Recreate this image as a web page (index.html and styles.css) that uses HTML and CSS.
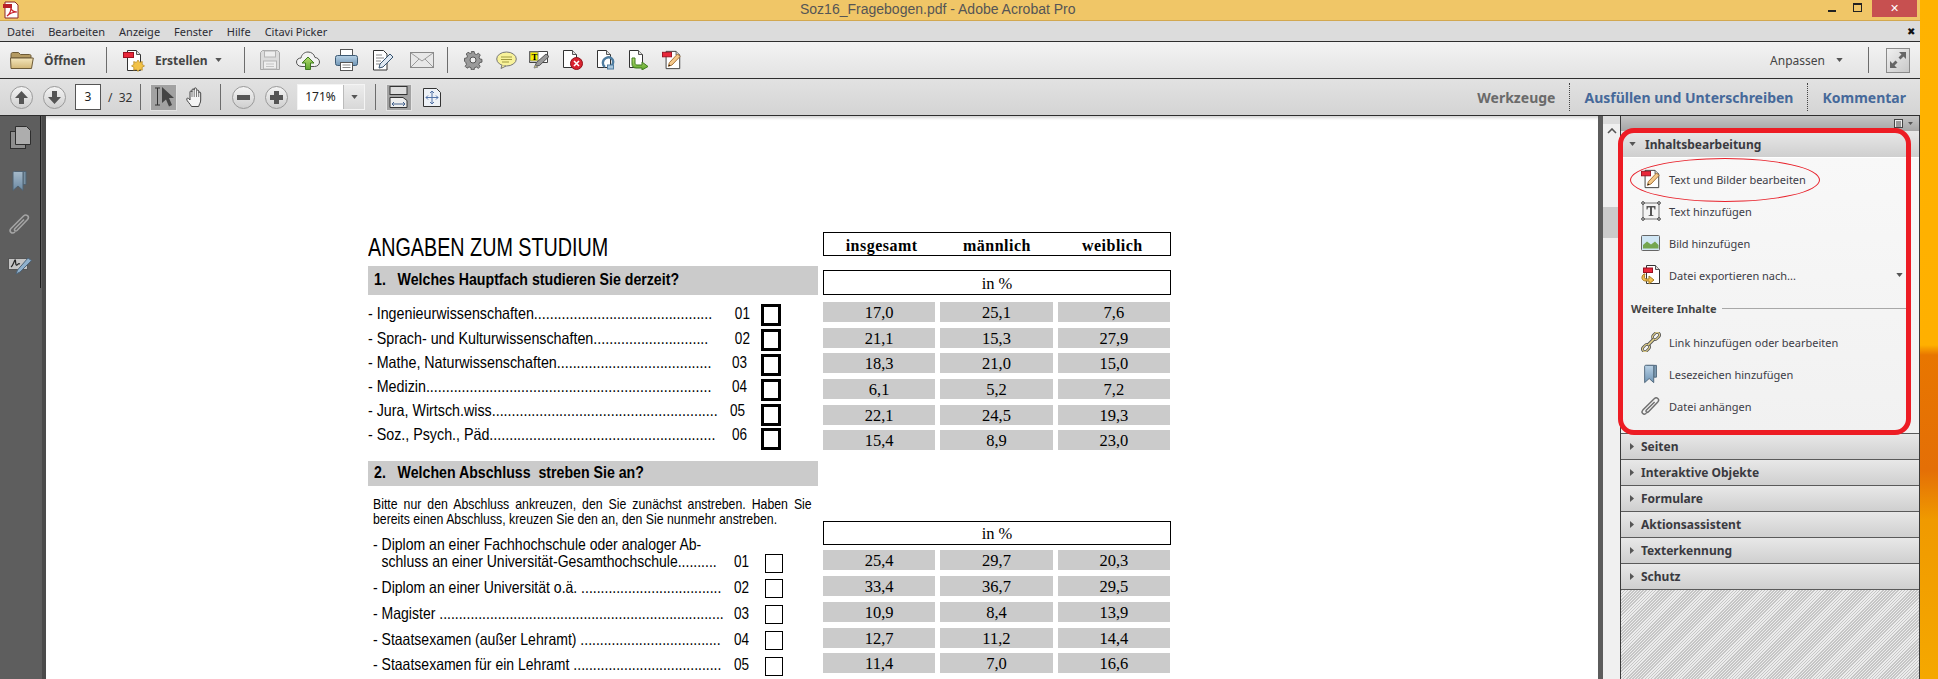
FILE: index.html
```html
<!DOCTYPE html>
<html lang="de">
<head>
  <meta charset="UTF-8">
  <title>Soz16_Fragebogen.pdf - Adobe Acrobat Pro</title>
  <link rel="stylesheet" href="styles.css">
</head>
<body>
  <svg class="defs" width="0" height="0">
    <defs>
      <linearGradient id="g-folder" x1="0" y1="0" x2="0" y2="1"><stop offset="0" stop-color="#f4e6bd"/><stop offset="1" stop-color="#d3b878"/></linearGradient>
      <linearGradient id="g-blue" x1="0" y1="0" x2="0" y2="1"><stop offset="0" stop-color="#b9d2e6"/><stop offset="1" stop-color="#6f95b5"/></linearGradient>
      <linearGradient id="g-green" x1="0" y1="0" x2="0" y2="1"><stop offset="0" stop-color="#b5dd70"/><stop offset="1" stop-color="#5ea52c"/></linearGradient>
      <symbol id="i-editdoc" viewBox="0 0 22 22">
        <path d="M4.500 1.500h11l4 4v15h-15z" fill="#fff" stroke="#333"/>
        <path d="M15.500 1.500v4h4" fill="#ddd" stroke="#555"/>
        <rect x="0.500" y="2.500" width="10" height="5" fill="#e8283a" stroke="#9a1020"/>
        <path d="M7 18l1-4 9-9.500 3 2.500-9 9.500z" fill="#f5c98a" stroke="#a06a30"/>
        <path d="M7 18l1-2 1.500 1z" fill="#111"/>
      </symbol>
      <symbol id="i-clip" viewBox="0 0 22 22">
        <path d="M6 19c-3 2.500-6.500-.5-4-3.500L14.500 3c2.800-2.500 6.500.5 4 3.500L8 17.500c-1.500 1.300-3.500-.5-2-2L15 6.500" fill="none" stroke="currentColor" stroke-width="1.600"/>
      </symbol>
      <symbol id="i-bookmark" viewBox="0 0 20 22">
        <path d="M4 1.500h12v13h-3v-13" fill="#7f9db5" stroke="#4d6478"/>
        <path d="M3 2.500c0-1 1-1 2-1h8v19l-5-4.500-5 4.500z" fill="url(#g-blue)" stroke="#4d6478"/>
      </symbol>
      <symbol id="i-caret" viewBox="0 0 8 5"><path d="M0 0h8L4 5z" fill="currentColor"/></symbol>
    </defs>
  </svg>

  <div class="window">
    <header class="titlebar">
      <svg class="app-icon" width="18" height="18" viewBox="0 0 18 18"><path d="M3 1h10l3 3v13H3z" fill="#fff" stroke="#8a2a2a"/><rect x="1" y="3" width="9" height="4" fill="#b8202a"/><path d="M5 15c3-2 4-6 4-9 0 3 2 5 6 5-4 0-7 1-10 4z" fill="none" stroke="#c8202a" stroke-width="1.200"/></svg>
      <div class="title">Soz16_Fragebogen.pdf - Adobe Acrobat Pro</div>
      <div class="win-controls">
        <span class="win-min"></span>
        <span class="win-max"></span>
        <span class="win-close">✕</span>
      </div>
    </header>

    <nav class="menubar">
      <span>Datei</span><span>Bearbeiten</span><span>Anzeige</span><span>Fenster</span><span>Hilfe</span><span>Citavi Picker</span>
      <span class="menu-x">✖</span>
    </nav>

    <div class="toolbar toolbar-main">
      <svg class="open-icon" width="24" height="19" viewBox="0 0 24 19"><path d="M1 3.500c0-1 .5-2 1.500-2h6l2 2h9c1 0 1.500.5 1.500 1.500v2H1z" fill="#b49a62" stroke="#6d5b38"/><path d="M1 17.500L.5 7h22.800l-1.800 10.500z" fill="url(#g-folder)" stroke="#6d5b38"/></svg>
      <span class="tool-label open-label">Öffnen</span>
      <span class="sep sep-open"></span>
      <svg class="create-icon" width="22" height="23" viewBox="0 0 22 23"><path d="M4.500 1.500h9l4 4v16h-13z" fill="#fff" stroke="#333"/><path d="M13.500 1.500v4h4" fill="#ddd" stroke="#555"/><rect x="0.500" y="3.500" width="10" height="5" fill="#e8283a" stroke="#9a1020"/><path d="M15 11l1.600 2.400 2.700-.8-.2 2.800 2.400 1.500-2.400 1.500.2 2.800-2.700-.8-1.600 2.100-1.600-2.100-2.700.8.200-2.800-2.400-1.500 2.400-1.500-.2-2.800 2.700.8z" fill="#f2c246" stroke="#b08420" stroke-width=".7"/></svg>
      <span class="tool-label create-label">Erstellen</span>
      <svg class="caret create-caret" width="7" height="4"><use href="#i-caret"/></svg>
      <span class="sep sep-create"></span>

      <span class="cell">
        <svg width="20" height="20" viewBox="0 0 20 20"><path d="M.5 2.500l2-2h15l2 2v17H.5z" fill="#dcdcdc" stroke="#a8a8a8"/><rect x="4.500" y="1" width="11" height="6" fill="#eee" stroke="#b4b4b4"/><rect x="3.500" y="11" width="13" height="8" fill="#eee" stroke="#b4b4b4"/><path d="M6 14h8M6 16.500h8" stroke="#c4c4c4"/></svg>
      </span>
      <span class="cell">
        <svg width="24" height="19" viewBox="0 0 24 19"><path d="M6 15.500c-3.500 0-5.500-2-5.500-4.500S2.500 7 5 7c.5-3.500 3.500-6 7-6 3.500 0 6 2 7 5.500 2.500 0 4.500 2 4.500 4.500s-2 4.500-5 4.500z" fill="#f2f2f2" stroke="#555"/><path d="M12 6l6 6h-3.500v6.500h-5V12H6z" fill="url(#g-green)" stroke="#3f7a1f"/></svg>
      </span>
      <span class="cell">
        <svg width="23" height="22" viewBox="0 0 23 22"><rect x="5.500" y=".5" width="12" height="7" fill="#fff" stroke="#555"/><rect x=".5" y="6.500" width="22" height="10" rx="2" fill="url(#g-blue)" stroke="#3d5a74"/><rect x="5.500" y="13.500" width="12" height="8" fill="#fff" stroke="#555"/><path d="M7.500 16h8M7.500 18.500h8" stroke="#888"/></svg>
      </span>
      <span class="cell">
        <svg width="22" height="21" viewBox="0 0 22 21"><path d="M.5.500h10l3.500 3.500v16H.5z" fill="#fff" stroke="#333"/><path d="M3 5h6M3 8h8M3 11h5M3 14h4" stroke="#888"/><path d="M6 18l1-4 10-10 3 3-10 10z" fill="#dfe8f2" stroke="#35526e"/></svg>
      </span>
      <span class="cell">
        <svg width="24" height="16" viewBox="0 0 24 16"><rect x=".5" y=".5" width="23" height="15" fill="#e8e8e8" stroke="#8a8a8a"/><path d="M1 1l11 8 11-8M1 15l8-8M23 15l-8-8" fill="none" stroke="#9a9a9a"/></svg>
      </span>
      <span class="sep sep-tools"></span>
      <span class="cell cell-sm">
        <svg width="19" height="19" viewBox="0 0 19 19"><path d="M8 .5h3l.5 2.500 2 .8 2.200-1.400 2 2-1.400 2.200.8 2 2.400.5v3l-2.500.5-.8 2 1.400 2.200-2 2-2.200-1.400-2 .8-.5 2.400H8l-.5-2.500-2-.8-2.200 1.400-2-2 1.400-2.200-.8-2L.5 11V8L3 7.500l.8-2L2.400 3.300l2-2L6.600 2.700l2-.8z" transform="scale(.92)" fill="#9a9a9a" stroke="#555"/><circle cx="9" cy="9" r="3" fill="#eee" stroke="#555"/></svg>
      </span>
      <span class="cell cell-sm">
        <svg width="21" height="18" viewBox="0 0 21 18"><ellipse cx="10.500" cy="8" rx="9.800" ry="7" fill="#f8f29a" stroke="#777"/><path d="M6 14l-1 3.500 5-2.500" fill="#f8f29a" stroke="#777"/><path d="M5 6h11M5 8.500h11M6 11h7" stroke="#a09a40"/></svg>
      </span>
      <span class="cell cell-sm">
        <svg width="21" height="18" viewBox="0 0 21 18"><path d="M.5.500h18v11H.5z" fill="#fff" stroke="#444"/><rect x="1" y="1" width="8" height="9" fill="#f5f000" stroke="#888"/><text class="svg-t" x="2.500" y="8.500">T</text><path d="M6 15l1.500-3.500L17 3l3 2.500-9.500 9z" fill="#9a9a9a" stroke="#555"/><path d="M5 17l1-2.500 3 1.500z" fill="#e4dc60" stroke="#888"/></svg>
      </span>
      <span class="cell cell-sm">
        <svg width="20" height="20" viewBox="0 0 20 20"><path d="M.5.500h9l4 4v13H.5z" fill="#fff" stroke="#333"/><path d="M9.500.5v4h4" fill="#ddd" stroke="#555"/><circle cx="13.500" cy="13.500" r="6" fill="#d8232f" stroke="#901018"/><path d="M11 11l5 5M16 11l-5 5" stroke="#fff" stroke-width="1.600"/></svg>
      </span>
      <span class="cell cell-sm">
        <svg width="18" height="20" viewBox="0 0 18 20"><path d="M.5.500h9l4 4v13H.5z" fill="#fff" stroke="#333"/><path d="M9.500.5v4h4" fill="#ddd" stroke="#555"/><path d="M8 17c-3-2-3-7 1-9s8 1 7 5-3 4-3 4" fill="none" stroke="#4f7da0" stroke-width="2.400"/><rect x="10.500" y="15" width="6" height="4" fill="#a9c6dc" stroke="#4f7da0"/></svg>
      </span>
      <span class="cell cell-sm">
        <svg width="20" height="20" viewBox="0 0 20 20"><path d="M.5.500h9l4 4v13H.5z" fill="#fff" stroke="#333"/><path d="M9.500.5v4h4" fill="#ddd" stroke="#555"/><path d="M6 8v5c0 1 1 2 2 2h5v-3l6 4.500-6 3.500v-2H7c-3 0-4-2-4-4V8z" fill="url(#g-green)" stroke="#3f7a1f"/></svg>
      </span>
      <span class="cell cell-sm"><svg width="20" height="20"><use href="#i-editdoc"/></svg></span>

      <span class="customize">Anpassen</span>
      <svg class="caret customize-caret" width="7" height="4"><use href="#i-caret"/></svg>
      <span class="sep sep-custom"></span>
      <span class="expand">
        <svg width="18" height="18" viewBox="0 0 18 18"><path d="M10 1h7v7l-2.500-2.500-3 3-2-2 3-3zM8 17H1v-7l2.500 2.500 3-3 2 2-3 3z" fill="#666"/></svg>
      </span>
    </div>

    <div class="toolbar toolbar-nav">
      <span class="round-cell"><span class="round"><svg width="13" height="13" viewBox="0 0 13 13"><path d="M6.500 0L13 7H9v6H4V7H0z" fill="#555"/></svg></span></span>
      <span class="round-cell"><span class="round"><svg width="13" height="13" viewBox="0 0 13 13"><path d="M6.500 13L13 6H9V0H4v6H0z" fill="#555"/></svg></span></span>
      <span class="page-input">3</span>
      <span class="page-total">/&nbsp; 32</span>
      <span class="sep sep-pager"></span>
      <span class="active-tool">
        <svg width="24" height="22" viewBox="0 0 24 22"><path d="M3 2h5M3 19h5M5.500 2v17" stroke="#333" fill="none"/><path d="M10 1l12 11h-5l3 7-3 1.500-3-7-4 3.500z" fill="#444"/></svg>
      </span>
      <span class="cell">
        <svg width="20" height="20" viewBox="0 0 20 20"><path d="M5.500 19.500c-1-2.500-5-5.500-4.800-7.500.2-1.500 2-1 3.300 1V5c0-1.500 2-1.500 2 0V3c0-1.500 2.200-1.500 2.200 0v-1c0-1.500 2.300-1.500 2.300 0v2c0-1.300 2.200-1.300 2.200 0v2c0-1.200 2-1.200 2 0v7c0 3-1.500 4-2 6.500z" fill="#f4f4f4" stroke="#444"/><path d="M6 5v5M8.200 3v7M10.500 2v8M12.700 4v6" stroke="#777" fill="none"/></svg>
      </span>
      <span class="sep sep-hand"></span>
      <span class="round-cell round-zoom"><span class="round"><svg width="13" height="13" viewBox="0 0 13 13"><rect y="4" width="13" height="5" fill="#555"/></svg></span></span>
      <span class="round-cell"><span class="round"><svg width="13" height="13" viewBox="0 0 13 13"><path d="M4 0h5v4h4v5H9v4H4V9H0V4h4z" fill="#555"/></svg></span></span>
      <span class="zoom-box">
        <span class="zoom-value">171%</span>
        <span class="zoom-drop"><svg class="caret" width="7" height="4"><use href="#i-caret"/></svg></span>
      </span>
      <span class="sep sep-zoom"></span>
      <span class="active-fit">
        <svg width="20" height="22" viewBox="0 0 20 22"><rect x="1" y="0.500" width="17" height="8" fill="#ddd" stroke="#333"/><path d="M1 21.500v-10h13l4 3v7z" fill="#eee" stroke="#333"/><path d="M3 18h13M3 18l2-2M3 18l2 2M16 18l-2-2M16 18l-2 2" stroke="#44628c" fill="none"/></svg>
      </span>
      <span class="cell fit-cell">
        <svg width="18" height="19" viewBox="0 0 18 19"><path d="M.5.500h13l4 4v14H.5z" fill="#eef2f7" stroke="#333"/><path d="M9 3v13M3 9.500h12M9 3L7 5M9 3l2 2M9 16l-2-2M9 16l2-2M3 9.500l2-2M3 9.500l2 2M15 9.500l-2-2M15 9.500l-2 2" stroke="#5474a8" fill="none"/></svg>
      </span>

      <span class="pane-link pane-tools">Werkzeuge</span>
      <span class="dotted"></span>
      <span class="pane-link">Ausfüllen und Unterschreiben</span>
      <span class="dotted"></span>
      <span class="pane-link">Kommentar</span>
    </div>

    <main class="workspace">
      <aside class="rail">
        <span class="rail-cell">
          <svg width="21" height="23" viewBox="0 0 21 23"><rect x=".5" y="5.500" width="15" height="17" fill="#8e8e8e" stroke="#2e2e2e"/><path d="M5.500.5h11l4 4v14h-15z" fill="#adadad" stroke="#2e2e2e"/></svg>
        </span>
        <span class="rail-cell rail-mark">
          <svg width="20" height="22"><use href="#i-bookmark"/></svg>
        </span>
        <span class="rail-cell rail-clip"><svg width="22" height="22"><use href="#i-clip"/></svg></span>
        <span class="rail-cell">
          <svg width="24" height="19" viewBox="0 0 24 19"><rect x=".5" y="1.500" width="19" height="11" fill="#c4c4c4" stroke="#555"/><path d="M3 10c2-1 3-6 4-7s0 6 2 5 1-2 3-1" fill="none" stroke="#222" stroke-width="1.200"/><path d="M8 17l1.500-4L20 1l3.500 2.500L12 15z" fill="#8fb0cc" stroke="#4d6478"/></svg>
        </span>
      </aside>

      <section class="page">
        <div class="sheet">
          <div class="col-left">
            <h1 class="doc-title">ANGABEN ZUM STUDIUM</h1>
            <h2 class="question"><span>1.&nbsp;&nbsp; Welches Hauptfach studieren Sie derzeit?</span></h2>
            <ul class="answers answers-bold">
              <li><span class="answer-text">- Ingenieurwissenschaften.............................................</span><span class="num">01</span><span class="box"></span></li>
              <li><span class="answer-text">- Sprach- und Kulturwissenschaften.............................</span><span class="num">02</span><span class="box"></span></li>
              <li><span class="answer-text">- Mathe, Naturwissenschaften.......................................</span><span class="num">03</span><span class="box"></span></li>
              <li><span class="answer-text">- Medizin........................................................................</span><span class="num">04</span><span class="box"></span></li>
              <li><span class="answer-text">- Jura, Wirtsch.wiss.........................................................</span><span class="num">05</span><span class="box"></span></li>
              <li><span class="answer-text">- Soz., Psych., Päd.........................................................</span><span class="num">06</span><span class="box"></span></li>
            </ul>
            <h2 class="question question-two"><span>2.&nbsp;&nbsp; Welchen Abschluss&nbsp; streben Sie an?</span></h2>
            <p class="hint"><span class="hint-first">Bitte nur den Abschluss ankreuzen, den Sie zunächst anstreben. Haben Sie</span> <span>bereits einen Abschluss, kreuzen Sie den an, den Sie nunmehr anstreben.</span></p>
            <ul class="answers answers-thin">
              <li class="two-line"><span class="answer-text">- Diplom an einer Fachhochschule oder analoger Ab-<br><span class="indent">schluss an einer Universität-Gesamthochschule..........</span></span><span class="num">01</span><span class="box"></span></li>
              <li><span class="answer-text">- Diplom an einer Universität o.ä. ....................................</span><span class="num">02</span><span class="box"></span></li>
              <li><span class="answer-text">- Magister .........................................................................</span><span class="num">03</span><span class="box"></span></li>
              <li><span class="answer-text">- Staatsexamen (außer Lehramt) ....................................</span><span class="num">04</span><span class="box"></span></li>
              <li><span class="answer-text">- Staatsexamen für ein Lehramt ......................................</span><span class="num">05</span><span class="box"></span></li>
            </ul>
          </div>

          <div class="col-right">
            <div class="frame frame-head"><span>insgesamt</span><span>männlich</span><span>weiblich</span></div>
            <div class="frame frame-unit">in %</div>
            <div class="results">
              <span>17,0</span><span>25,1</span><span>7,6</span>
              <span>21,1</span><span>15,3</span><span>27,9</span>
              <span>18,3</span><span>21,0</span><span>15,0</span>
              <span>6,1</span><span>5,2</span><span>7,2</span>
              <span>22,1</span><span>24,5</span><span>19,3</span>
              <span>15,4</span><span>8,9</span><span>23,0</span>
            </div>
            <div class="frame frame-unit frame-unit-two">in %</div>
            <div class="results results-two">
              <span>25,4</span><span>29,7</span><span>20,3</span>
              <span>33,4</span><span>36,7</span><span>29,5</span>
              <span>10,9</span><span>8,4</span><span>13,9</span>
              <span>12,7</span><span>11,2</span><span>14,4</span>
              <span>11,4</span><span>7,0</span><span>16,6</span>
            </div>
          </div>
        </div>
      </section>

      <div class="scrollbar">
        <span class="scroll-up"><svg width="10" height="6" viewBox="0 0 10 6"><path d="M1 5l4-4 4 4" fill="none" stroke="#555" stroke-width="1.600"/></svg></span>
        <span class="scroll-thumb"></span>
      </div>

      <aside class="panel">
        <div class="panel-top">
          <svg width="12" height="10" viewBox="0 0 12 10"><rect x=".5" y=".5" width="8" height="8" fill="#eee" stroke="#444"/><path d="M2 3h5M2 5h5M2 7h5" stroke="#444"/></svg>
          <svg class="caret" width="5" height="3"><use href="#i-caret"/></svg>
        </div>
        <div class="group-head group-open">
          <svg class="caret" width="7" height="4"><use href="#i-caret"/></svg>
          <span>Inhaltsbearbeitung</span>
        </div>
        <div class="group-body">
          <div class="item"><svg width="20" height="20"><use href="#i-editdoc"/></svg><span>Text und Bilder bearbeiten</span></div>
          <div class="item">
            <svg width="20" height="20" viewBox="0 0 20 20"><rect x="2" y="2" width="16" height="16" fill="#f4f4f4" stroke="#777"/><path d="M5.500 5h9v3.500h-1L13 6.500h-2V14l1.500.5v.5h-5v-.5L9 14V6.500H7L6.500 8.500h-1z" fill="#555"/><g fill="#fff" stroke="#333"><circle cx="2" cy="2" r="1.300"/><circle cx="18" cy="2" r="1.300"/><circle cx="2" cy="18" r="1.300"/><circle cx="18" cy="18" r="1.300"/></g></svg>
            <span>Text hinzufügen</span>
          </div>
          <div class="item">
            <svg width="20" height="20" viewBox="0 0 20 20"><rect x=".5" y="2.500" width="18" height="15" rx="1" fill="#d0e6f4" stroke="#666"/><path d="M2 15.500V12l4-3.500 4 3 4-3 3.500 3.500v3.500z" fill="#74a650"/></svg>
            <span>Bild hinzufügen</span>
          </div>
          <div class="item">
            <svg width="20" height="20" viewBox="0 0 20 20"><path d="M5.500.5h9l4 4v14h-13z" fill="#fff" stroke="#333"/><path d="M14.500.5v4h4" fill="#ddd" stroke="#555"/><rect x="2.500" y="3" width="9" height="4.500" fill="#e8283a" stroke="#9a1020"/><path d="M3 9c-3 2-3 7 2 7h3v3l5-4-5-4v3H5c-2 0-2-3-1-5z" fill="#f2c050" stroke="#a87c20"/></svg>
            <span>Datei exportieren nach...</span>
            <svg class="caret item-more" width="7" height="4"><use href="#i-caret"/></svg>
          </div>
          <div class="subhead"><span>Weitere Inhalte</span></div>
          <div class="item">
            <svg width="20" height="20" viewBox="0 0 20 20"><g fill="none"><rect x="11" y="1.500" width="8" height="5" rx="2.500" transform="rotate(-45 15 4)" stroke="#555" stroke-width="2.600"/><rect x="1" y="13.500" width="8" height="5" rx="2.500" transform="rotate(-45 5 16)" stroke="#555" stroke-width="2.600"/><rect x="11" y="1.500" width="8" height="5" rx="2.500" transform="rotate(-45 15 4)" stroke="#e6d48a" stroke-width="1"/><rect x="1" y="13.500" width="8" height="5" rx="2.500" transform="rotate(-45 5 16)" stroke="#e6d48a" stroke-width="1"/><path d="M7 13l6-6" stroke="#555" stroke-width="3.400"/><path d="M7 13l6-6" stroke="#e6d48a" stroke-width="1.600"/></g></svg>
            <span>Link hinzufügen oder bearbeiten</span>
          </div>
          <div class="item"><svg width="20" height="20"><use href="#i-bookmark"/></svg><span>Lesezeichen hinzufügen</span></div>
          <div class="item"><svg class="clip-icon" width="20" height="20"><use href="#i-clip"/></svg><span>Datei anhängen</span></div>
        </div>
        <div class="group-head"><svg class="arrow" width="4" height="7" viewBox="0 0 4 7"><path d="M0 0l4 3.500L0 7z" fill="currentColor"/></svg><span>Seiten</span></div>
        <div class="group-head"><svg class="arrow" width="4" height="7" viewBox="0 0 4 7"><path d="M0 0l4 3.500L0 7z" fill="currentColor"/></svg><span>Interaktive Objekte</span></div>
        <div class="group-head"><svg class="arrow" width="4" height="7" viewBox="0 0 4 7"><path d="M0 0l4 3.500L0 7z" fill="currentColor"/></svg><span>Formulare</span></div>
        <div class="group-head"><svg class="arrow" width="4" height="7" viewBox="0 0 4 7"><path d="M0 0l4 3.500L0 7z" fill="currentColor"/></svg><span>Aktionsassistent</span></div>
        <div class="group-head"><svg class="arrow" width="4" height="7" viewBox="0 0 4 7"><path d="M0 0l4 3.500L0 7z" fill="currentColor"/></svg><span>Texterkennung</span></div>
        <div class="group-head"><svg class="arrow" width="4" height="7" viewBox="0 0 4 7"><path d="M0 0l4 3.500L0 7z" fill="currentColor"/></svg><span>Schutz</span></div>
        <div class="hatch"></div>
        <div class="mark-box"></div>
        <div class="mark-oval"></div>
      </aside>
    </main>
  </div>
  <div class="desktop"></div>
</body>
</html>
```

FILE: styles.css
```css
* {
  box-sizing: border-box;
  margin: 0;
  padding: 0;
}
html, body {
  height: 679px;
  overflow: hidden;
}
body {
  display: flex;
  width: 1938px;
  font-family: "Noto Sans", sans-serif;
  font-size: 11px;
  color: #3c3c46;
}
.defs {
  position: absolute;
}
.window {
  width: 1920px;
  height: 679px;
  display: flex;
  flex-direction: column;
  flex: none;
}
.desktop {
  flex: 1;
  background: linear-gradient(180deg, #ffb300 0, #ffb000 345px, #e87600 355px, #e46f06 470px, #f09a00 520px, #f5a800 679px);
}

/* title + menu */
.titlebar {
  height: 21px;
  flex: none;
  background: #f0c667;
  border-bottom: 1px solid #d2a850;
  display: flex;
  align-items: center;
  position: relative;
  padding-left: 2px;
}
.title {
  position: absolute;
  left: 800px;
  top: 1px;
  font-family: "Liberation Sans", sans-serif;
  font-size: 14px;
  color: #555;
}
.win-controls {
  margin-left: auto;
  display: flex;
  align-items: flex-start;
  height: 20px;
  padding-right: 3px;
}
.win-min {
  width: 8px;
  height: 2px;
  background: #222;
  margin-top: 10px;
}
.win-max {
  width: 9px;
  height: 9px;
  border: 1px solid #222;
  border-top-width: 2px;
  margin: 3px 10px 0 17px;
}
.win-close {
  width: 45px;
  height: 17px;
  background: #c75050;
  color: #fff;
  font-size: 11px;
  line-height: 16px;
  text-align: center;
}
.menubar {
  height: 20px;
  flex: none;
  background: #dcdcdc;
  display: flex;
  align-items: center;
  gap: 14px;
  padding-left: 7px;
  font-size: 11px;
  color: #2c2c34;
}
.menu-x {
  margin-left: auto;
  margin-right: 5px;
  font-size: 10px;
  color: #111;
}

/* toolbars */
.toolbar {
  height: 37px;
  flex: none;
  display: flex;
  align-items: center;
  border-top: 1px solid #2e2e2e;
}
.toolbar-main {
  background: linear-gradient(180deg, #f3f3f3, #e3e3e3);
  padding-left: 10px;
}
.toolbar-nav {
  height: 38px;
  background: linear-gradient(180deg, #e2e2e2, #d4d4d4);
  border-bottom: 1px solid #2e2e2e;
  padding-left: 5px;
}
.sep {
  width: 1px;
  height: 26px;
  background: #6c6c6c;
  flex: none;
}
.tool-label {
  font-weight: 700;
  font-size: 12px;
  color: #444;
}
.open-label { margin-left: 10px; width: 44px; }
.sep-open { margin-left: 18px; }
.create-icon { margin-left: 16px; }
.create-label { margin-left: 10px; width: 54px; }
.caret { color: #555; flex: none; }
.create-caret { margin-left: 6px; }
.sep-create { margin-left: 22px; margin-right: 6px; }
.cell {
  width: 38px;
  flex: none;
  display: flex;
  align-items: center;
  justify-content: center;
}
.cell-sm { width: 33px; }
.sep-tools { margin: 0 9px 0 6px; }
.svg-t {
  font-family: "Liberation Serif", serif;
  font-size: 9px;
  font-weight: 700;
}
.customize {
  margin-left: auto;
  font-size: 12px;
  color: #444;
}
.customize-caret { margin-left: 11px; }
.sep-custom { margin-left: 25px; }
.expand {
  width: 24px;
  height: 25px;
  margin: 0 10px 0 17px;
  border: 1px solid #8a8a8a;
  background: linear-gradient(135deg, #f0f0f0, #c8c8c8);
  display: flex;
  align-items: center;
  justify-content: center;
}
.round-cell {
  width: 33px;
  flex: none;
  display: flex;
  justify-content: center;
}
.round {
  width: 23px;
  height: 23px;
  border-radius: 50%;
  border: 1px solid #9a9a9a;
  background: linear-gradient(180deg, #f4f4f4, #cfcfcf);
  display: flex;
  align-items: center;
  justify-content: center;
}
.page-input {
  width: 26px;
  height: 26px;
  margin-left: 4px;
  background: #fff;
  border: 1px solid #555;
  text-align: center;
  font-size: 12px;
  line-height: 24px;
  color: #222;
}
.page-total {
  width: 23px;
  margin-left: 7px;
  font-size: 12px;
  color: #333;
  white-space: nowrap;
}
.sep-pager { margin-left: 9px; }
.active-tool {
  width: 27px;
  height: 27px;
  margin-left: 9px;
  background: #a2a2a2;
  border: 1px solid #e4e4e4;
  display: flex;
  align-items: center;
  justify-content: center;
}
.sep-hand { margin-left: 5px; }
.round-zoom { margin-left: 6px; }
.zoom-box {
  width: 68px;
  height: 26px;
  margin-left: 4px;
  display: flex;
  border: 1px solid #f4f4f4;
  background: #fff;
}
.zoom-value {
  width: 45px;
  text-align: center;
  font-size: 12px;
  line-height: 24px;
  color: #222;
}
.zoom-drop {
  flex: 1;
  background: linear-gradient(180deg, #ececec, #d8d8d8);
  border-left: 1px solid #bbb;
  display: flex;
  align-items: center;
  justify-content: center;
}
.sep-zoom { margin-left: 10px; }
.active-fit {
  width: 26px;
  height: 27px;
  margin-left: 10px;
  background: #a2a2a2;
  border: 1px solid #e4e4e4;
  display: flex;
  align-items: center;
  justify-content: center;
}
.fit-cell { width: 40px; }
.pane-link {
  font-weight: 700;
  font-size: 14px;
  color: #46699a;
  white-space: nowrap;
}
.pane-tools {
  margin-left: auto;
  color: #6a6a6a;
}
.dotted {
  height: 28px;
  margin: 0 14px;
  border-left: 1px dotted #444;
}
.toolbar-nav .pane-link:last-child { margin-right: 14px; }

/* workspace */
.workspace {
  flex: 1;
  min-height: 0;
  display: flex;
}
.rail {
  width: 46px;
  flex: none;
  background: #5e5e5e;
  border-right: 4px solid #4a4a4a;
  display: flex;
  flex-direction: column;
}
.rail-cell {
  width: 41px;
  height: 43px;
  display: flex;
  align-items: center;
  justify-content: center;
  border-right: 1px solid #1e1e1e;
}
.rail-mark svg { opacity: .8; }
.rail-clip { color: #a4a4a4; }
.page {
  flex: 1;
  min-width: 0;
  background: #fff;
  padding: 116px 0 0 322px;
  overflow: hidden;
  box-shadow: inset 0 4px 3px -2px #d4d4d4;
}
.sheet {
  display: grid;
  grid-template-columns: 450px 348px;
  column-gap: 5px;
  color: #000;
}

/* left column of the questionnaire, the print uses a narrow Arial */
.col-left {
  font-family: "Liberation Sans", sans-serif;
}
.doc-title {
  height: 34px;
  padding-top: 1px;
  font-size: 25px;
  line-height: 28px;
  font-weight: 400;
  white-space: nowrap;
  transform: scaleX(.79);
  transform-origin: left center;
}
.question {
  height: 29px;
  padding-left: 6px;
  background: #cbcbcb;
  font-size: 16px;
  line-height: 27px;
  font-weight: 700;
}
.question span {
  display: inline-block;
  white-space: nowrap;
  transform: scaleX(.885);
  transform-origin: left center;
}
.answers {
  list-style: none;
  margin-top: 8px;
}
.answers li {
  height: 24.8px;
  display: flex;
  align-items: center;
  font-size: 16.5px;
  white-space: nowrap;
}
.answer-text {
  width: 421px;
  margin-right: -57px;
  padding-bottom: var(--lift, 3px);
  flex: none;
  transform: scaleX(.865);
  transform-origin: left center;
}
.num {
  width: 29px;
  padding-bottom: var(--lift, 3px);
  flex: none;
  transform: scaleX(.82) translateX(var(--nudge, 0));
  transform-origin: left center;
}
.box {
  width: 20px;
  height: 22px;
  border: 3px solid #000;
  flex: none;
}
/* printed lines run a little tighter than the boxes beside them */
.answers-bold li:nth-child(1) { --nudge: 3.5px; }
.answers-bold li:nth-child(2) { --lift: 4.2px; --nudge: 3.5px; }
.answers-bold li:nth-child(3) { --lift: 5.4px; }
.answers-bold li:nth-child(4) { --lift: 6.6px; }
.answers-bold li:nth-child(5) { --lift: 7.8px; --nudge: -2.5px; }
.answers-bold li:nth-child(6) { --lift: 9px; }
.question-two {
  height: 25px;
  line-height: 24px;
  margin-top: 9px;
}
.hint {
  width: 535px;
  margin: 10px 0 0 5px;
  font-size: 15px;
  line-height: 15px;
  white-space: nowrap;
  transform: scaleX(.82);
  transform-origin: left center;
}
.hint span {
  display: block;
}
.hint-first {
  white-space: normal;
  text-align-last: justify;
}
.answers-thin {
  margin-top: 11px;
  padding-left: 5px;
}
.answers-thin li {
  height: 25.9px;
}
.answers-thin li:nth-child(2) {
  margin-top: 3px;
}
.answers-thin .two-line {
  height: 36px;
  line-height: 17px;
  align-items: flex-end;
}
.answers-thin .answer-text {
  width: 425px;
  margin-right: -64px;
  padding-bottom: 3px;
  transform: scaleX(.85);
}
.answers-thin .num {
  width: 31px;
  padding-bottom: 3px;
}
.answers-thin .box {
  width: 18px;
  height: 19px;
  border-width: 1px;
}
.indent {
  padding-left: 10px;
}

/* right column with the results */
.frame {
  border: 1px solid #000;
  font-family: "Liberation Serif", serif;
  font-size: 16px;
}
.frame-head {
  height: 24px;
  display: grid;
  grid-template-columns: repeat(3, 1fr);
  text-align: center;
  font-weight: 700;
  letter-spacing: .5px;
  line-height: 25px;
}
.frame-unit {
  height: 25px;
  margin-top: 14px;
  text-align: center;
  line-height: 25px;
  font-size: 16.5px;
}
.frame-unit-two {
  height: 24px;
  margin-top: 71px;
  line-height: 24px;
}
.results {
  margin-top: 7px;
  width: 347px;
  display: grid;
  grid-template-columns: repeat(3, 1fr);
  grid-auto-rows: 20px;
  gap: 5.7px 5px;
  font-family: "Liberation Serif", serif;
  font-size: 16.5px;
  line-height: 21px;
  text-align: center;
}
.results span {
  background: #cbcbcb;
}
.results-two {
  margin-top: 5px;
}

/* scrollbar + side panel */
.scrollbar {
  width: 23px;
  flex: none;
  background: #f0f0f0;
  border-left: 5px solid #5c5c5c;
  border-right: 1px solid #3a3a3a;
  display: flex;
  flex-direction: column;
  align-items: center;
}
.scroll-up {
  width: 100%;
  height: 22px;
  border-top: 8px solid #dcdcdc;
  display: flex;
  align-items: center;
  justify-content: center;
  margin-bottom: 69px;
}
.scroll-thumb {
  width: 100%;
  height: 31px;
  background: #cbcbcb;
}
.panel {
  width: 299px;
  flex: none;
  position: relative;
  display: flex;
  flex-direction: column;
  background: #f5f5f5;
  border-right: 1px solid #3a3a3a;
}
.panel-top {
  height: 15px;
  flex: none;
  background: linear-gradient(180deg, #c4c4c4, #a6a6a6);
  display: flex;
  align-items: center;
  justify-content: flex-end;
  gap: 2px;
  padding-right: 6px;
}
.group-head {
  height: 26px;
  flex: none;
  display: flex;
  align-items: center;
  background: linear-gradient(180deg, #e8e8e8, #cfcfcf);
  border-top: 1px solid #5a5a5a;
  font-size: 12px;
  font-weight: 700;
  color: #3a3a40;
  padding-left: 8px;
}
.group-head span {
  margin-left: 7px;
}
.group-open {
  height: 27px;
  border-top: 0;
  border-bottom: 1px solid #fff;
}
.group-open span {
  margin-left: 9px;
}
.arrow {
  color: #555;
  margin-left: 1px;
}
.group-body {
  height: 275px;
  flex: none;
  padding-top: 5px;
  background: linear-gradient(180deg, #f8f8f8, #f1f1f1);
}
.item {
  height: 32px;
  display: flex;
  align-items: center;
  position: relative;
  padding-left: 48px;
}
.item > svg:first-child {
  position: absolute;
  left: 20px;
  top: 6px;
}
.item-more {
  position: absolute;
  right: 16px;
  top: 14px;
}
.clip-icon { color: #6e6e6e; }
.subhead {
  height: 20px;
  margin: 7px 13px 8px 10px;
  display: flex;
  align-items: center;
  gap: 5px;
  font-size: 11px;
  font-weight: 700;
  color: #444;
  white-space: nowrap;
}
.subhead::after {
  content: "";
  flex: 1;
  height: 1px;
  background: #a8a8a8;
}
.hatch {
  flex: 1;
  border-top: 1px solid #5a5a5a;
  background: repeating-linear-gradient(135deg, #c6c6c6 0 1.2px, #ececec 1.2px 2.2px);
}
.mark-box {
  position: absolute;
  left: -3px;
  top: 12px;
  width: 293px;
  height: 307px;
  border: 5px solid #ed1c24;
  border-radius: 16px;
}
.mark-oval {
  position: absolute;
  left: 9px;
  top: 42px;
  width: 190px;
  height: 44px;
  border: 1px solid #e8202a;
  border-radius: 50%;
}
```
